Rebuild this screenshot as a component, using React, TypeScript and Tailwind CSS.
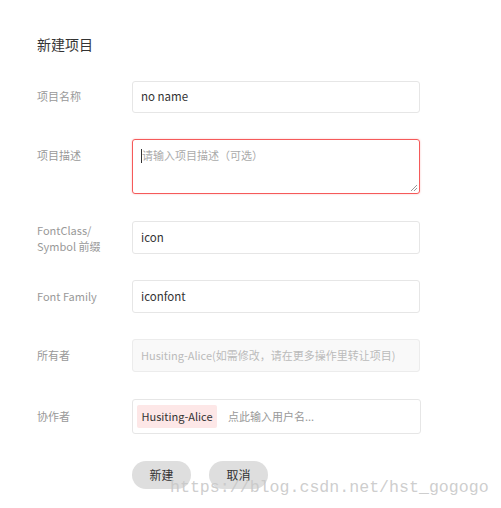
const FONT = "font-['Noto_Sans_CJK_SC',sans-serif]";

function Label({ children, className = '' }: { children: React.ReactNode; className?: string }) {
  return (
    <div className={`w-[95px] shrink-0 text-[11px] leading-[16px] text-[#999] ${className}`}>{children}</div>
  );
}

export default function App() {
  return (
    <div className={`relative w-[501px] h-[508px] bg-white overflow-hidden ${FONT}`}>
      <div className="pl-[37px] pt-[34px]">
        <h1 className="text-[14px] leading-[20px] text-[#333] mb-[27px]">新建项目</h1>

        <div className="flex items-start mb-[26px]">
          <Label className="pt-[7px]">项目名称</Label>
          <div className="w-[288px] h-[32px] border border-[#e6e6e6] rounded-[3px] px-[8px] flex items-center text-[11.5px] text-[#333]">
            no name
          </div>
        </div>

        <div className="flex items-start mb-[27px]">
          <Label className="pt-[8px]">项目描述</Label>
          <div className="relative w-[288px] h-[55px] border border-[#f55a5a] rounded-[3px] px-[8px] pt-[7px] text-[11px] leading-[16px] text-[#aaa] shadow-[0_0_2px_rgba(245,90,90,0.4)]">
            <span className="inline-block w-px h-[14px] bg-[#333] align-middle -mt-[2px]"></span>
            请输入项目描述（可选）
            <svg className="absolute right-[1px] bottom-[1px]" width="8" height="8" viewBox="0 0 8 8">
              <path d="M7 1 L1 7 M7 4 L4 7" stroke="#999" strokeWidth="1" />
            </svg>
          </div>
        </div>

        <div className="flex items-start mb-[26px]">
          <Label className="pt-[1px] leading-[15px]">
            FontClass/
            <br />
            Symbol 前缀
          </Label>
          <div className="w-[288px] h-[33px] border border-[#e6e6e6] rounded-[3px] px-[8px] flex items-center text-[11.5px] text-[#333]">
            icon
          </div>
        </div>

        <div className="flex items-start mb-[26px]">
          <Label className="pt-[8px]">Font Family</Label>
          <div className="w-[288px] h-[33px] border border-[#e6e6e6] rounded-[3px] px-[8px] flex items-center text-[11.5px] text-[#333]">
            iconfont
          </div>
        </div>

        <div className="flex items-start mb-[27px]">
          <Label className="pt-[8px]">所有者</Label>
          <div className="w-[288px] h-[33px] border border-[#ececec] bg-[#f9f9f9] rounded-[3px] px-[8px] flex items-center text-[11px] text-[#bbb] whitespace-nowrap">
            Husiting-Alice(如需修改，请在更多操作里转让项目)
          </div>
        </div>

        <div className="flex items-start mb-[27px]">
          <Label className="pt-[9px]">协作者</Label>
          <div className="w-[289px] h-[35px] border border-[#e6e6e6] rounded-[3px] px-[4px] flex items-center gap-[11px] text-[11px] whitespace-nowrap">
            <span className="w-[80px] h-[23px] flex items-center justify-center bg-[#fde7e7] rounded-[2px] text-[#333]">Husiting-Alice</span>
            <span className="text-[#999]">点此输入用户名...</span>
          </div>
        </div>

        <div className="flex gap-[18px] pl-[95px]">
          <button className="w-[59px] h-[28px] rounded-full bg-[#dedede] text-[12px] text-[#333]">新建</button>
          <button className="w-[59px] h-[28px] rounded-full bg-[#dedede] text-[12px] text-[#333]">取消</button>
        </div>
      </div>

      <div className="absolute left-[170px] top-[477px] text-[16.6px] leading-[22px] text-[#c8c8c8]/90 font-['Liberation_Mono',monospace] whitespace-nowrap">
        https://blog.csdn.net/hst_gogogo
      </div>
    </div>
  );
}
